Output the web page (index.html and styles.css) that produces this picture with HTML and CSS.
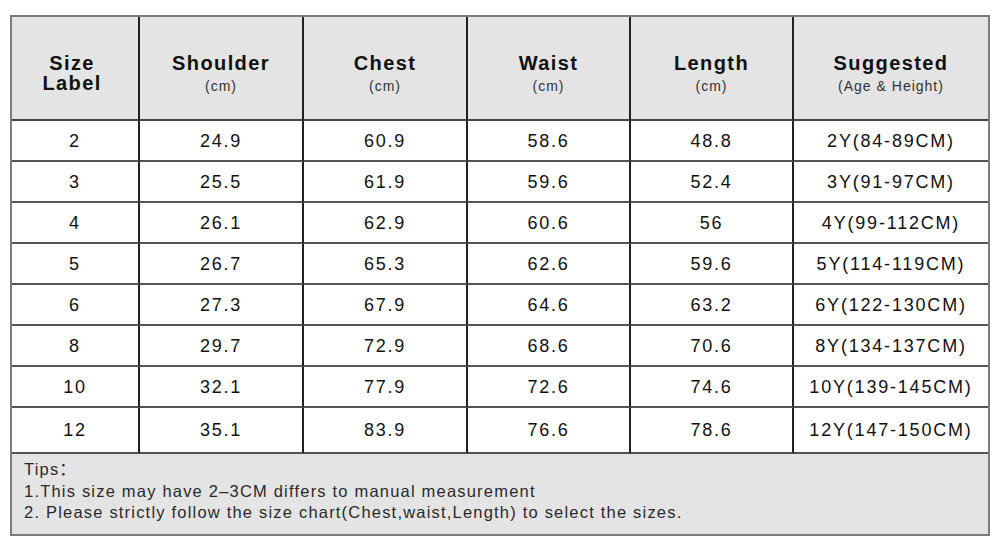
FILE: index.html
```html
<!DOCTYPE html>
<html lang="en">
<head>
    <meta charset="UTF-8">
    <meta name="viewport" content="width=device-width, initial-scale=1.0">
    <title>Size Chart</title>
    <link rel="stylesheet" href="styles.css">
</head>
<body>
    <div class="chart">
        <table class="sizes">
            <colgroup>
                <col class="c1">
                <col class="c2">
                <col class="c3">
                <col class="c4">
                <col class="c5">
                <col class="c6">
            </colgroup>
            <thead>
                <tr>
                    <th><span class="title two">Size<br>Label</span></th>
                    <th><span class="title">Shoulder</span><span class="sub">(cm)</span></th>
                    <th><span class="title">Chest</span><span class="sub">(cm)</span></th>
                    <th><span class="title">Waist</span><span class="sub">(cm)</span></th>
                    <th><span class="title">Length</span><span class="sub">(cm)</span></th>
                    <th><span class="title">Suggested</span><span class="sub">(Age &amp; Height)</span></th>
                </tr>
            </thead>
            <tbody>
                <tr><td>2</td><td>24.9</td><td>60.9</td><td>58.6</td><td>48.8</td><td>2Y(84-89CM)</td></tr>
                <tr><td>3</td><td>25.5</td><td>61.9</td><td>59.6</td><td>52.4</td><td>3Y(91-97CM)</td></tr>
                <tr><td>4</td><td>26.1</td><td>62.9</td><td>60.6</td><td>56</td><td>4Y(99-112CM)</td></tr>
                <tr><td>5</td><td>26.7</td><td>65.3</td><td>62.6</td><td>59.6</td><td>5Y(114-119CM)</td></tr>
                <tr><td>6</td><td>27.3</td><td>67.9</td><td>64.6</td><td>63.2</td><td>6Y(122-130CM)</td></tr>
                <tr><td>8</td><td>29.7</td><td>72.9</td><td>68.6</td><td>70.6</td><td>8Y(134-137CM)</td></tr>
                <tr><td>10</td><td>32.1</td><td>77.9</td><td>72.6</td><td>74.6</td><td>10Y(139-145CM)</td></tr>
                <tr class="last"><td>12</td><td>35.1</td><td>83.9</td><td>76.6</td><td>78.6</td><td>12Y(147-150CM)</td></tr>
            </tbody>
            <tfoot>
                <tr>
                    <td colspan="6" class="tips">
                        <p>Tips：</p>
                        <p>1.This size may have 2–3CM differs to manual measurement</p>
                        <p>2. Please strictly follow the size chart(Chest,waist,Length) to select the sizes.</p>
                    </td>
                </tr>
            </tfoot>
        </table>
    </div>
</body>
</html>
```

FILE: styles.css
```css
*{
    margin: 0;
    padding: 0;
    box-sizing: border-box;
}
body{
    background-color: #fff;
    font-family: "Liberation Sans", Arial, "Noto Sans CJK SC", sans-serif;
    color: #111;
}
.chart{
    padding: 15px 10px;
}
.sizes{
    width: 980px;
    table-layout: fixed;
    border-collapse: separate;
    border-spacing: 0;
    border: 2px solid #7c7c7c;
}
.c1{ width: 128px; }
.c2{ width: 164px; }
.c3{ width: 164px; }
.c4{ width: 163px; }
.c5{ width: 163px; }
.c6{ width: 194px; }

.sizes th,
.sizes td{
    text-align: center;
    vertical-align: middle;
    border-right: 2px solid #222;
    border-bottom: 2px solid #555;
}
.sizes th:last-child,
.sizes td:last-child{
    border-right: none;
}
.sizes th{
    height: 104px;
    padding-top: 10px;
    background-color: #e4e4e4;
    font-weight: bold;
    border-bottom-color: #444;
}
.title{
    display: block;
    font-size: 20px;
    letter-spacing: 1.4px;
    line-height: 20px;
}
.title.two{
    line-height: 20px;
    padding-right: 6px;
}
.sub{
    display: block;
    margin-top: 5px;
    font-size: 14px;
    font-weight: normal;
    letter-spacing: 1px;
    color: #333;
}
.sizes td{
    height: 41px;
    font-size: 18px;
    letter-spacing: 1.8px;
    padding-top: 1px;
}
.sizes tr.last td{
    height: 46px;
}
.sizes td.tips{
    height: 80px;
    border-bottom: none;
    background-color: #e4e4e4;
    text-align: left;
    vertical-align: top;
    padding: 5px 12px 0;
    font-size: 16.5px;
    letter-spacing: 1.2px;
    line-height: 21.5px;
    color: #2a2a2a;
}
```
